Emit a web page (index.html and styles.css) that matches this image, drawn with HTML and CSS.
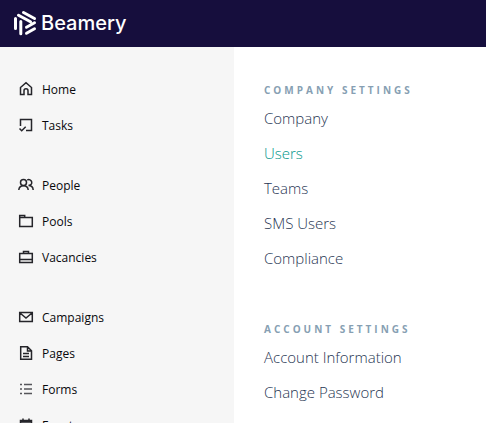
FILE: index.html
```html
<!DOCTYPE html>
<html lang="en">
<head>
    <meta charset="UTF-8">
    <meta name="viewport" content="width=device-width, initial-scale=1.0">
    <title>Beamery</title>
    <link rel="stylesheet" href="styles.css">
</head>
<body>
    <header class="topbar">
        <a class="brand" href="#">
            <svg class="brand-mark" viewBox="0 0 24 26" aria-hidden="true">
                <path d="M10.500 2.500 21.500 8.500M5.500 5.200 17.500 11.800M2.500 8.500V18.500M7.800 11.500V23.800M13.500 17.200 21.500 12.800M13.500 23.300 21.500 18.800"/>
            </svg>
            <span class="brand-name">Beamery</span>
        </a>
    </header>

    <div class="layout">
        <!-- Main navigation -->
        <nav class="sidebar">
            <ul class="nav-group">
                <li><a class="nav-item" href="#">
                    <svg class="nav-icon" viewBox="0 0 16 16"><path d="M2.5 6.5 8 1.8l5.5 4.7v7H10V9.8a2 2 0 0 0-4 0v3.7H2.5z"/></svg>
                    Home
                </a></li>
                <li><a class="nav-item" href="#">
                    <svg class="nav-icon" viewBox="0 0 16 16"><path d="M2.5 9V2.5h11v11H8M1.5 11.5l2.2 2.2 4-4"/></svg>
                    Tasks
                </a></li>
            </ul>

            <ul class="nav-group">
                <li><a class="nav-item" href="#">
                    <svg class="nav-icon" viewBox="0 0 16 16"><circle cx="5.5" cy="5.5" r="3"/><path d="M.8 13c.2-2.8 2-4.3 4.7-4.3s4.5 1.5 4.7 4.3M9.3 3a3 3 0 1 1 1.2 5.6c2.7 0 4.5 1.6 4.7 4.4"/></svg>
                    People
                </a></li>
                <li><a class="nav-item" href="#">
                    <svg class="nav-icon" viewBox="0 0 16 16"><path d="M1.7 13.500v-11h5v2h7.600v9zM1.700 4.500h5"/></svg>
                    Pools
                </a></li>
                <li><a class="nav-item" href="#">
                    <svg class="nav-icon" viewBox="0 0 16 16"><path d="M1.700 4.500h12.600v9H1.700zM5.500 4.500v-2h5v2M1.700 10.500h12.600"/></svg>
                    Vacancies
                </a></li>
            </ul>

            <ul class="nav-group">
                <li><a class="nav-item" href="#">
                    <svg class="nav-icon" viewBox="0 0 16 16"><path d="M1.700 3.500h12.600v9H1.700zM2 4l6 5 6-5"/></svg>
                    Campaigns
                </a></li>
                <li><a class="nav-item" href="#">
                    <svg class="nav-icon" viewBox="0 0 16 16"><path d="M2.700 1.700h6.800l4 4v8.600H2.700zM9.500 2v4h3.500M5 8.500h6M5 11.500h6"/></svg>
                    Pages
                </a></li>
                <li><a class="nav-item" href="#">
                    <svg class="nav-icon nav-icon-list" viewBox="0 0 16 16"><path d="M2 3.500h2M6 3.500h8M2 8h2M6 8h8M2 12.500h2M6 12.500h8"/></svg>
                    Forms
                </a></li>
                <li><a class="nav-item" href="#">
                    <svg class="nav-icon" viewBox="0 0 16 16"><path d="M2.500 3.500h11v10h-11zM2.500 5h11M5 1.500v3M11 1.500v3"/></svg>
                    Events
                </a></li>
            </ul>
        </nav>

        <!-- Settings menu -->
        <main class="settings">
            <section class="settings-group">
                <h2 class="settings-title">Company Settings</h2>
                <ul class="settings-list">
                    <li><a class="settings-link" href="#">Company</a></li>
                    <li><a class="settings-link active" href="#">Users</a></li>
                    <li><a class="settings-link" href="#">Teams</a></li>
                    <li><a class="settings-link" href="#">SMS Users</a></li>
                    <li><a class="settings-link" href="#">Compliance</a></li>
                </ul>
            </section>

            <section class="settings-group">
                <h2 class="settings-title">Account Settings</h2>
                <ul class="settings-list">
                    <li><a class="settings-link" href="#">Account Information</a></li>
                    <li><a class="settings-link" href="#">Change Password</a></li>
                </ul>
            </section>
        </main>
    </div>
</body>
</html>
```

FILE: styles.css
```css
* {
    margin: 0;
    padding: 0;
    box-sizing: border-box;
}

body {
    display: flex;
    flex-direction: column;
    height: 100vh;
    overflow: hidden;
    font-family: 'Segoe UI', 'Open Sans', 'Noto Sans', sans-serif;
    background: #fff;
}

ul {
    list-style: none;
}

a {
    color: inherit;
    text-decoration: none;
}

.topbar {
    display: flex;
    flex: none;
    padding: 9px 13px 10px;
    background: #160e3d;
}

.brand {
    display: flex;
    align-items: center;
    gap: 4px;
    height: 28px;
    color: #fff;
}

.brand-mark {
    width: 24px;
    height: 26px;
    fill: none;
    stroke: #fff;
    stroke-width: 3;
    stroke-linecap: round;
    stroke-linejoin: round;
}

.brand-name {
    font-family: Inter, sans-serif;
    font-size: 20px;
    font-weight: 500;
    line-height: 28px;
}

.layout {
    display: flex;
    flex: 1;
    min-height: 0;
}

.sidebar {
    display: flex;
    flex: none;
    flex-direction: column;
    gap: 24px;
    width: 234px;
    padding: 24px 18px;
    background: #f6f6f6;
    overflow: hidden;
}

.nav-item {
    display: flex;
    align-items: center;
    gap: 8px;
    height: 36px;
    color: #08080c;
    font-size: 12px;
    font-weight: 500;
}

.nav-icon {
    width: 16px;
    height: 16px;
    fill: none;
    stroke: #25252a;
    stroke-width: 1.5;
}

.nav-icon-list {
    stroke: #55555a;
}

.settings {
    display: flex;
    flex: 1;
    flex-direction: column;
    gap: 45px;
    padding: 35px 30px;
    overflow: hidden;
}

.settings-title {
    margin-bottom: 3px;
    color: #879fb3;
    font-size: 10px;
    font-weight: 700;
    line-height: 16px;
    letter-spacing: 3px;
    text-transform: uppercase;
}

.settings-link {
    display: block;
    color: #1f3552;
    font-size: 15px;
    font-weight: 300;
    line-height: 35px;
    white-space: nowrap;
}

.settings-link.active {
    color: #00958a;
}
```
